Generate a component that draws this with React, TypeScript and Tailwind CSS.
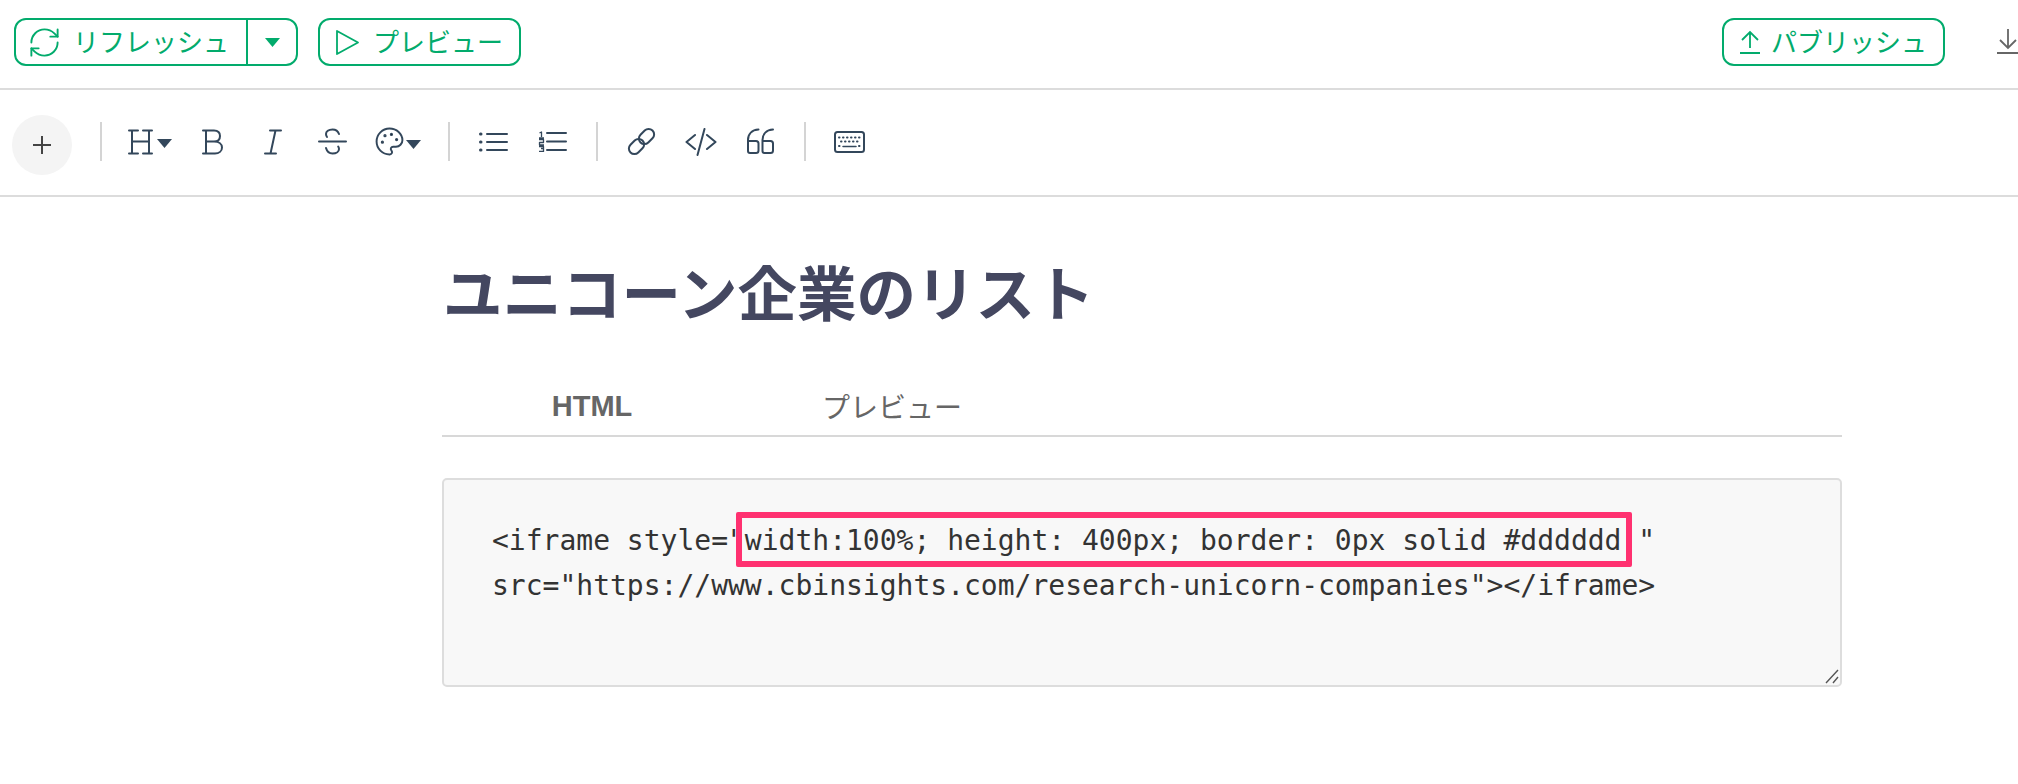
import { Palette, RefreshCw } from "lucide-react";

const sans = "font-['Lato','Noto_Sans_CJK_JP',sans-serif]";
const ink = "#33475b";

const code =
  '<iframe style="width:100%; height: 400px; border: 0px solid #dddddd " src="https://www.cbinsights.com/research-unicorn-companies"></iframe>';

function Caret({ color = ink }: { color?: string }) {
  return (
    <svg width="15" height="9" viewBox="0 0 15 9" className="shrink-0">
      <path d="M0 0h15L7.5 9z" fill={color} />
    </svg>
  );
}

function Divider({ className }: { className: string }) {
  return <div className={`h-[39px] w-[2px] shrink-0 bg-[#d4d4d4] ${className}`} />;
}

function Icon({ w, h, className, children }: { w: number; h: number; className: string; children: React.ReactNode }) {
  return (
    <svg
      width={w}
      height={h}
      viewBox={`0 0 ${w} ${h}`}
      fill="none"
      stroke={ink}
      strokeWidth="2"
      strokeLinecap="round"
      strokeLinejoin="round"
      className={`shrink-0 ${className}`}
    >
      {children}
    </svg>
  );
}

function TopBar() {
  return (
    <header className="flex h-[90px] shrink-0 items-start border-b-2 border-[#dcdcdc] pt-[18px] text-[26px] text-[#02ab6c]">
      <div className="ml-[14px] flex h-[48px] w-[284px] items-center rounded-[12px] border-2 border-[#02ab6c]">
        <RefreshCw size={35} strokeWidth={1.3} className="ml-[11px] shrink-0" />
        <span className="ml-[11px] leading-none">リフレッシュ</span>
        <div className="ml-auto flex h-full w-[50px] items-center justify-center border-l-2 border-[#02ab6c]">
          <Caret color="#02ab6c" />
        </div>
      </div>

      <div className="ml-[20px] flex h-[48px] w-[203px] items-center rounded-[12px] border-2 border-[#02ab6c]">
        <svg width="25" height="27" viewBox="0 0 25 27" fill="none" stroke="#02ab6c" strokeWidth="1.8" strokeLinejoin="round" className="ml-[15px] shrink-0">
          <path d="M2 2l21 11.500L2 25z" />
        </svg>
        <span className="ml-[13px] leading-none">プレビュー</span>
      </div>

      <div className="ml-auto flex h-[48px] w-[223px] items-center rounded-[12px] border-2 border-[#02ab6c]">
        <svg width="22" height="24" viewBox="0 0 22 24" fill="none" stroke="#02ab6c" strokeWidth="1.8" className="ml-[15px] shrink-0">
          <path d="M11 18V2M3 10l8-8 8 8M1 23h20" />
        </svg>
        <span className="ml-[10px] leading-none">パブリッシュ</span>
      </div>

      <svg width="22" height="26" viewBox="0 0 22 26" fill="none" stroke="#666666" strokeWidth="1.8" className="ml-[52px] mr-[-1px] mt-[10px] shrink-0">
        <path d="M11 1v19M3 12l8 8 8-8M0 25h22" />
      </svg>
    </header>
  );
}

function Toolbar() {
  return (
    <div className="flex h-[107px] shrink-0 items-center border-b-2 border-[#dcdcdc] pb-[2px] pl-[12px]">
      <div className="mt-[7px] flex size-[60px] shrink-0 items-center justify-center rounded-full bg-[#f4f4f4]">
        <svg width="18" height="18" viewBox="0 0 18 18" stroke="#444444" strokeWidth="2">
          <path d="M9 0v18M0 9h18" />
        </svg>
      </div>
      <Divider className="ml-[28px]" />

      <div className="ml-[26px] flex w-[44px] shrink-0 items-center">
        <Icon w={25} h={26} className="">
          <path d="M1 1.500h9M15 1.500h9M1 24.500h9M15 24.500h9M4 1.500v23M21 1.500v23M4 12.500h17" />
        </Icon>
        <div className="ml-[4px] mt-[4px]"><Caret /></div>
      </div>

      <Icon w={21} h={26} className="ml-[30px]">
        <path d="M1 1.500h11c4 0 6 2.500 6 5.500s-2 5.500-6 5.500H4M12 12.500c5 0 8 2.500 8 6s-3 6-7 6H1M4 1.500v23" />
      </Icon>

      <Icon w={18} h={26} className="ml-[41px]">
        <path d="M6 1.500h11M1 24.500h11M11.500 1.500l-5 23" />
      </Icon>

      <Icon w={29} h={27} className="ml-[36px]">
        <path d="M1 13.500h27M21 6c-1-3-3.500-4.500-6.500-4.500-4 0-6.500 2-6.500 4.500 0 1 .3 2 1 3M8 20c1 3.500 3.500 5.500 6.500 5.500 4 0 6.500-2 6.500-4.500 0-1-.3-1.700-.8-2.500" />
      </Icon>

      <div className="ml-[29px] flex w-[45px] shrink-0 items-center">
        <Palette size={31} strokeWidth={1.5} color={ink} className="ml-[-2px] shrink-0" />
        <div className="ml-[1px] mt-[5px]"><Caret /></div>
      </div>
      <Divider className="ml-[27px]" />

      <Icon w={29} h={20} className="ml-[29px]">
        <path d="M8 2h20M8 10h20M8 18h20" />
        <path d="M1.500 2h.5M1.500 10h.5M1.500 18h.5" strokeWidth="3" />
      </Icon>

      <Icon w={29} h={21} className="ml-[30px]">
        <path d="M9 2h19M9 10.500h19M9 19h19" />
        <path d="M1.500 2L3.500 1v5M1 7h5M1 8.500h4.500v3h-4v2.500h4.500M1 15.500h4.500v2H3M5.500 17.500v3H1" strokeWidth="1.300" strokeLinecap="butt" />
      </Icon>
      <Divider className="ml-[29px]" />

      <Icon w={29} h={29} className="ml-[29px]">
        <path d="M15.500 21.300l-4.200 4.200a5.500 5.500 0 0 1-7.800-7.800l4.200-4.200a5.500 5.500 0 0 1 7.800 7.800z" />
        <path d="M21.300 15.500l4.200-4.200a5.500 5.500 0 0 0-7.800-7.800l-4.200 4.200a5.500 5.500 0 0 0 7.800 7.800z" />
      </Icon>

      <Icon w={32} h={28} className="ml-[29px]">
        <path d="M10 7L1.500 14l8.500 7M22 7l8.500 7-8.500 7M19.500 1l-7 26" />
      </Icon>

      <Icon w={29} h={27} className="ml-[29px]">
        <path d="M12.500 1.500C6 2 2 6 2 12v11c0 1 1 2 2 2h6c1.500 0 2.500-1 2.500-2.500v-7c0-1.500-1-2.500-2.500-2.500H2M27 1.500c-6.500.5-10.500 4.500-10.500 10.500v11c0 1 1 2 2 2h6c1.500 0 2.500-1 2.500-2.500v-7c0-1.500-1-2.500-2.500-2.500h-8" />
      </Icon>
      <Divider className="ml-[29px]" />

      <Icon w={31} h={22} className="ml-[28px]">
        <rect x="1" y="1" width="29" height="20" rx="2.500" />
        <path d="M5 6.500h.5M9 6.500h.5M13 6.500h.5M17 6.500h.5M21 6.500h.5M25 6.500h.5M7 10.500h.5M11 10.500h.5M15 10.500h.5M19 10.500h.5M23 10.500h.5M5 15h.5M25 15h.5" />
        <path d="M9 15.500h13" strokeWidth="1.500" />
      </Icon>
    </div>
  );
}

function Editor() {
  return (
    <main className="ml-[442px] w-[1400px]">
      <h1 className="ml-px mt-[61px] text-[59.5px] font-bold leading-[70px] text-[#444760]">ユニコーン企業のリスト</h1>

      <div className="mt-[50px] flex h-[59px] border-b-2 border-[#d8d8d8] text-[#666666]">
        <div className="flex h-[57px] w-[300px] items-center justify-center font-['Liberation_Sans',sans-serif] text-[29px] font-bold">HTML</div>
        <div className="flex h-[57px] w-[300px] items-center justify-center text-[28px]">プレビュー</div>
      </div>

      <div className="relative mt-[41px]">
        <textarea
          readOnly
          value={code}
          className="block h-[209px] w-full resize-none rounded-[5px] border-2 border-[#dddddd] bg-[#f8f8f8] pl-[48px] pr-[49px] pt-[38px] font-['DejaVu_Sans_Mono',monospace] text-[28px] leading-[45px] text-[#333333] outline-none"
        />
        <div className="pointer-events-none absolute left-[294px] top-[34px] h-[55px] w-[896px] rounded-[2px] border-[6px] border-[#ff3170]" />
        <svg width="14" height="15" viewBox="0 0 14 15" stroke="#555555" strokeWidth="1.400" className="pointer-events-none absolute bottom-[3px] right-[3px]">
          <path d="M1 14L13 1M8 14l5-6" />
        </svg>
      </div>
    </main>
  );
}

export default function App() {
  return (
    <div className={`flex h-[784px] w-[2018px] flex-col overflow-hidden bg-white ${sans}`}>
      <TopBar />
      <Toolbar />
      <Editor />
    </div>
  );
}
